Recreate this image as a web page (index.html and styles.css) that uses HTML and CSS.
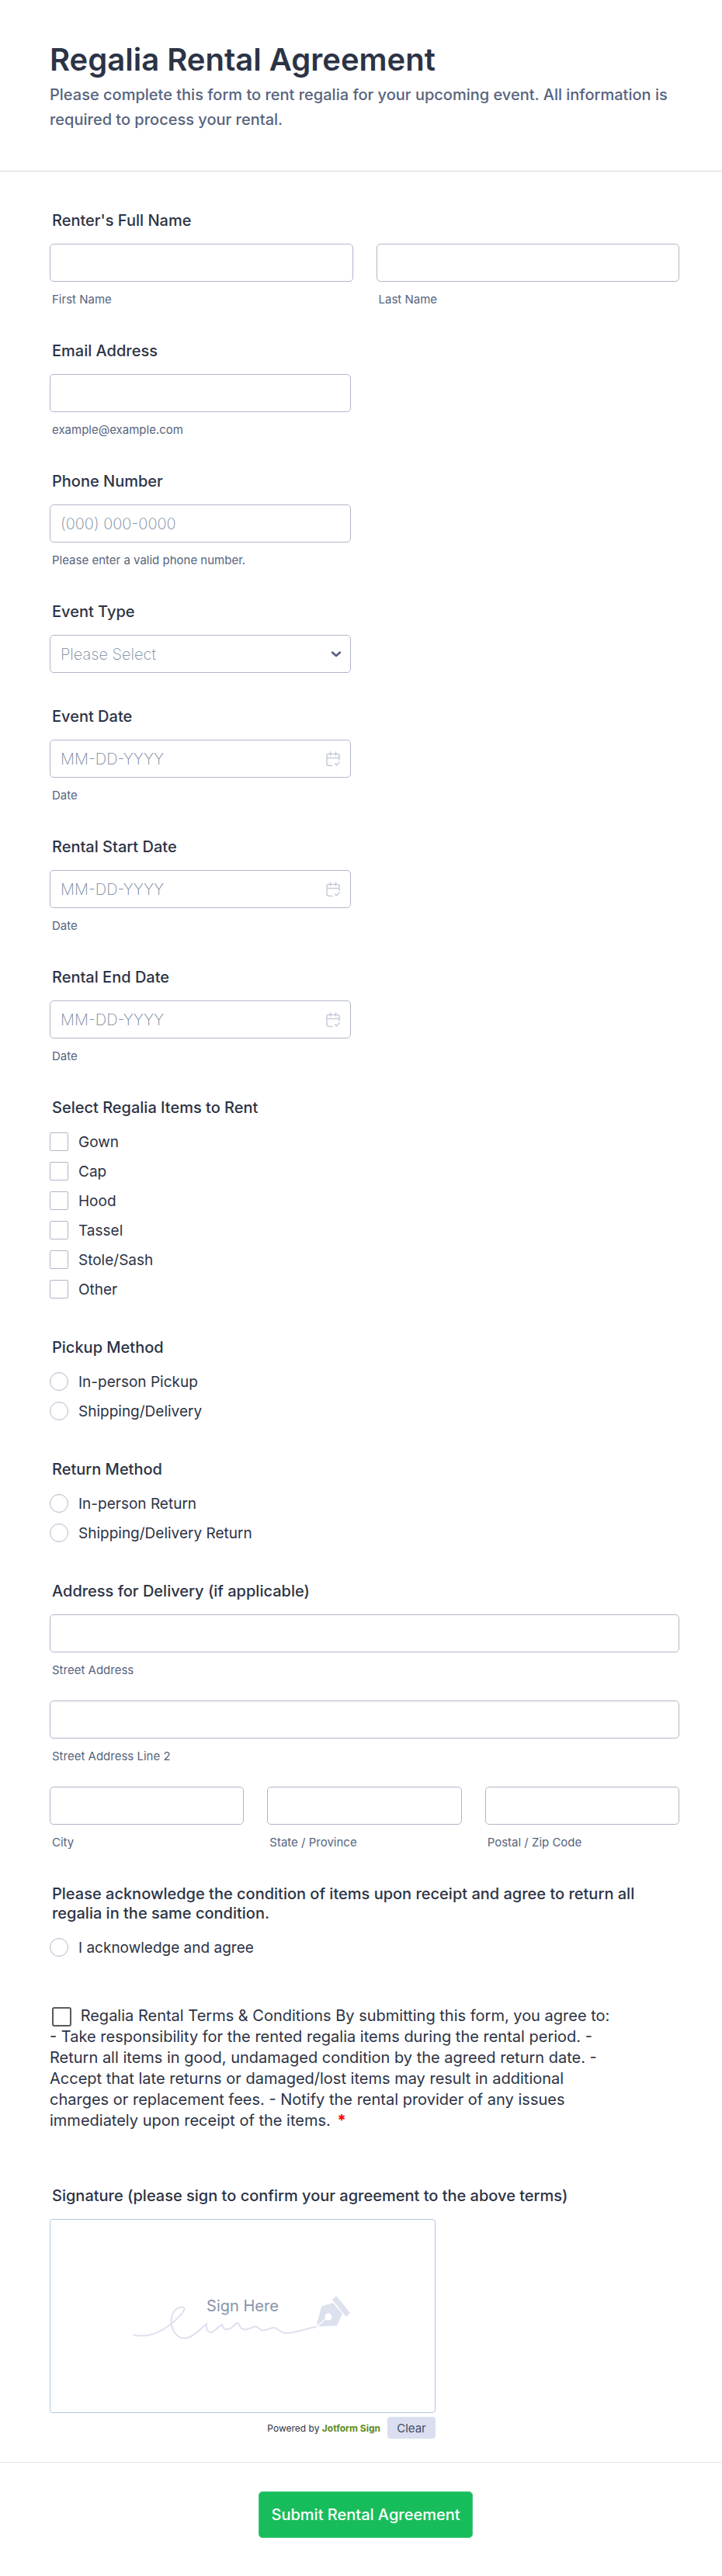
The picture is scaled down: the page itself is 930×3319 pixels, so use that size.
FILE: index.html
```html
<!DOCTYPE html>
<html lang="en">

<head>
    <meta charset="UTF-8">
    <meta name="viewport" content="width=device-width, initial-scale=1.0">
    <title>Regalia Rental Agreement</title>
    <link rel="stylesheet" href="styles.css">
</head>

<body>
    <!-- shared icon -->
    <svg class="sprite" aria-hidden="true">
        <symbol id="icon-calendar" viewBox="0 0 18 20">
            <path d="M8 18.5H4a3 3 0 0 1-3-3V5.500a2 2 0 0 1 2-2h12a2 2 0 0 1 2 2V11M1 8.500h16M5.500 1v4M12.500 1v4M11.500 16l2 2L17 14" fill="none" stroke="#c7cad9" stroke-width="1.500" stroke-linecap="round" stroke-linejoin="round" />
        </symbol>
    </svg>

    <form class="form" action="#" method="post">
        <header class="form-header">
            <h1>Regalia Rental Agreement</h1>
            <p>Please complete this form to rent regalia for your upcoming event. All information is required to process your rental.</p>
        </header>

        <div class="form-body">
            <fieldset class="field">
                <legend class="label">Renter's Full Name</legend>
                <div class="row">
                    <div class="cell">
                        <input class="input" type="text" id="first-name">
                        <label class="sub-label" for="first-name">First Name</label>
                    </div>
                    <div class="cell">
                        <input class="input" type="text" id="last-name">
                        <label class="sub-label" for="last-name">Last Name</label>
                    </div>
                </div>
            </fieldset>

            <div class="field">
                <label class="label" for="email">Email Address</label>
                <div class="cell half">
                    <input class="input" type="email" id="email">
                    <label class="sub-label" for="email">example@example.com</label>
                </div>
            </div>

            <div class="field">
                <label class="label" for="phone">Phone Number</label>
                <div class="cell half">
                    <input class="input" type="tel" id="phone" placeholder="(000) 000-0000">
                    <label class="sub-label" for="phone">Please enter a valid phone number.</label>
                </div>
            </div>

            <div class="field">
                <label class="label" for="event-type">Event Type</label>
                <div class="control half">
                    <select class="input" id="event-type">
                        <option>Please Select</option>
                    </select>
                    <svg class="arrow" viewBox="0 0 14 10" aria-hidden="true">
                        <path d="M2 2.500l5 4.500 5-4.500" fill="none" stroke="#535d80" stroke-width="2.500" stroke-linecap="round" stroke-linejoin="round" />
                    </svg>
                </div>
            </div>

            <div class="field">
                <label class="label" for="event-date">Event Date</label>
                <div class="cell half">
                    <div class="control">
                        <input class="input" type="text" id="event-date" placeholder="MM-DD-YYYY">
                        <svg class="calendar" aria-hidden="true"><use href="#icon-calendar" /></svg>
                    </div>
                    <label class="sub-label" for="event-date">Date</label>
                </div>
            </div>

            <div class="field">
                <label class="label" for="start-date">Rental Start Date</label>
                <div class="cell half">
                    <div class="control">
                        <input class="input" type="text" id="start-date" placeholder="MM-DD-YYYY">
                        <svg class="calendar" aria-hidden="true"><use href="#icon-calendar" /></svg>
                    </div>
                    <label class="sub-label" for="start-date">Date</label>
                </div>
            </div>

            <div class="field">
                <label class="label" for="end-date">Rental End Date</label>
                <div class="cell half">
                    <div class="control">
                        <input class="input" type="text" id="end-date" placeholder="MM-DD-YYYY">
                        <svg class="calendar" aria-hidden="true"><use href="#icon-calendar" /></svg>
                    </div>
                    <label class="sub-label" for="end-date">Date</label>
                </div>
            </div>

            <fieldset class="field options">
                <legend class="label">Select Regalia Items to Rent</legend>
                <label class="option"><input type="checkbox" name="items">Gown</label>
                <label class="option"><input type="checkbox" name="items">Cap</label>
                <label class="option"><input type="checkbox" name="items">Hood</label>
                <label class="option"><input type="checkbox" name="items">Tassel</label>
                <label class="option"><input type="checkbox" name="items">Stole/Sash</label>
                <label class="option"><input type="checkbox" name="items">Other</label>
            </fieldset>

            <fieldset class="field options">
                <legend class="label">Pickup Method</legend>
                <label class="option"><input type="radio" name="pickup">In-person Pickup</label>
                <label class="option"><input type="radio" name="pickup">Shipping/Delivery</label>
            </fieldset>

            <fieldset class="field options">
                <legend class="label">Return Method</legend>
                <label class="option"><input type="radio" name="return">In-person Return</label>
                <label class="option"><input type="radio" name="return">Shipping/Delivery Return</label>
            </fieldset>

            <fieldset class="field">
                <legend class="label">Address for Delivery (if applicable)</legend>
                <div class="address">
                    <div class="cell">
                        <input class="input" type="text" id="street">
                        <label class="sub-label" for="street">Street Address</label>
                    </div>
                    <div class="cell">
                        <input class="input" type="text" id="street2">
                        <label class="sub-label" for="street2">Street Address Line 2</label>
                    </div>
                    <div class="row">
                        <div class="cell">
                            <input class="input" type="text" id="city">
                            <label class="sub-label" for="city">City</label>
                        </div>
                        <div class="cell">
                            <input class="input" type="text" id="state">
                            <label class="sub-label" for="state">State / Province</label>
                        </div>
                        <div class="cell">
                            <input class="input" type="text" id="zip">
                            <label class="sub-label" for="zip">Postal / Zip Code</label>
                        </div>
                    </div>
                </div>
            </fieldset>

            <fieldset class="field options">
                <legend class="label">Please acknowledge the condition of items upon receipt and agree to return all regalia in the same condition.</legend>
                <label class="option"><input type="radio" name="acknowledge">I acknowledge and agree</label>
            </fieldset>

            <div class="field terms">
                <input type="checkbox" id="terms" required>
                <label for="terms">Regalia Rental Terms &amp; Conditions By submitting this form, you agree to: - Take responsibility for the rented regalia items during the rental period. - Return all items in good, undamaged condition by the agreed return date. - Accept that late returns or damaged/lost items may result in additional charges or replacement fees. - Notify the rental provider of any issues immediately upon receipt of the items.</label>
                <span class="required">*</span>
            </div>

            <div class="field">
                <div class="label">Signature (please sign to confirm your agreement to the above terms)</div>
                <div class="signature">
                    <div class="pad">
                        <svg class="scribble" viewBox="10 14 284 60" aria-hidden="true">
                            <path d="M11.500 68.500C32 73 50 62 62 52C74 42 81 32 73 32.500C62 33 58 47 60 56C64 70 72 74 79 72.500C90 70 99 59 105 54C104 62 107 65 110 65C116 65 120 57 125 55C127 62 130 62 135 60.500C140 58 142 53 145.500 53C148 55 147 61 154 61.500C160 61 164 58 169 57.500C172 58 173 63 178 62.500C184 62 187 59 192 59C197 60 200 66 208 66C220 66 234 60 246 58" fill="none" stroke="#dde1ee" stroke-width="2" stroke-linecap="round" />
                            <path d="M247 55l6-23.500 15-4.500 12 14-7 15.500-24 1z" fill="#dde1ee" />
                            <path d="M247 57.500L262 45" fill="none" stroke="#fff" stroke-width="1.500" />
                            <circle cx="262" cy="45" r="4.500" fill="#fff" />
                            <path d="M268 23l4-4 17 21-4 4z" fill="#dde1ee" stroke="#dde1ee" stroke-width="1.500" stroke-linejoin="round" />
                        </svg>
                        <span class="sign-here">Sign Here</span>
                    </div>
                    <div class="pad-footer">
                        <span class="powered">Powered by <b>Jotform Sign</b></span>
                        <button class="clear" type="button">Clear</button>
                    </div>
                </div>
            </div>
        </div>

        <footer class="form-footer">
            <button class="submit" type="submit">Submit Rental Agreement</button>
        </footer>
    </form>
</body>

</html>
```
FILE: styles.css
```css
* {
    box-sizing: border-box;
}

body {
    margin: 0;
    font-family: Inter, sans-serif;
    font-size: 19px;
    color: #2c3345;
    background: #fff;
}

.sprite {
    display: none;
}

.form-header {
    padding: 52px 55px 42px 64px;
    border-bottom: 1px solid #d7d8e1;
}

.form-header h1 {
    margin: 0;
    font-size: 40px;
    font-weight: 600;
    line-height: 50px;
}

.form-header p {
    margin: 4px 0 8px;
    font-size: 20px;
    font-weight: 500;
    line-height: 32px;
    color: #57647e;
}

.form-body {
    display: flex;
    flex-direction: column;
    gap: 44px;
    padding: 51px 55px 30px 64px;
}

.field {
    min-width: 0;
    margin: 0;
    padding: 0;
    border: 0;
}

.label {
    display: block;
    margin-bottom: 17px;
    padding: 0 3px;
    font-size: 20px;
    font-weight: 500;
    line-height: 25px;
}

.sub-label {
    padding: 0 3px;
    font-size: 15px;
    line-height: 20px;
    color: #57647e;
}

.row {
    display: flex;
    gap: 30px;
}

.cell {
    display: flex;
    flex: 1;
    flex-direction: column;
    gap: 13px;
    min-width: 0;
}

.half {
    width: 388px;
    max-width: 100%;
}

.address {
    display: flex;
    flex-direction: column;
    gap: 29px;
}

.input {
    display: block;
    width: 100%;
    height: 49px;
    padding: 0 13px;
    border: 1px solid #b1b7c8;
    border-radius: 5px;
    font-family: inherit;
    font-size: 20px;
    font-weight: 200;
    color: #2c3345;
    background: #fff;
}

.input::placeholder {
    color: #76889f;
    opacity: 1;
}

select.input {
    appearance: none;
    color: #76889f;
}

/* icons lie over the right end of the input */
.control {
    position: relative;
}

.arrow,
.calendar {
    position: absolute;
    top: 0;
    bottom: 0;
    margin: auto 0;
    pointer-events: none;
}

.arrow {
    right: 12px;
    width: 14px;
    height: 10px;
}

.calendar {
    right: 14px;
    width: 18px;
    height: 20px;
}

.options .label {
    margin-bottom: 12px;
}

.option {
    display: flex;
    align-items: center;
    gap: 13px;
    height: 38px;
}

.option input {
    appearance: none;
    width: 24px;
    height: 24px;
    margin: 0;
    border: 1px solid #b1b7c8;
    border-radius: 2px;
    background: #fff;
}

.option input[type="radio"] {
    border-radius: 50%;
}

.option input:checked {
    border: 7px solid #18bd5b;
}

.terms {
    max-width: 736px;
    padding: 12px 0 27px;
    font-size: 20px;
    line-height: 27px;
}

.terms input {
    appearance: none;
    width: 25px;
    height: 25px;
    margin: 0 6px 0 3px;
    border: 2px solid #5a5a60;
    border-radius: 3px;
    vertical-align: middle;
}

.terms input:checked {
    background: #18bd5b;
}

.required {
    margin-left: 3px;
    font-weight: 700;
    color: #f00;
}

.signature {
    width: 497px;
    max-width: 100%;
}

.pad {
    position: relative;
    display: flex;
    align-items: center;
    justify-content: center;
    height: 250px;
    border: 1px solid #b3c6e0;
    border-radius: 4px;
}

.scribble {
    width: 284px;
    height: 60px;
}

.sign-here {
    position: absolute;
    top: 98px;
    font-size: 20px;
    line-height: 26px;
    color: #8894ab;
}

.pad-footer {
    display: flex;
    align-items: center;
    justify-content: flex-end;
    gap: 9px;
    margin-top: 5px;
}

.powered {
    font-size: 12px;
}

.powered b {
    font-weight: 700;
    color: #5d8a1c;
}

.clear {
    width: 62px;
    height: 28px;
    padding: 0;
    border: 0;
    border-radius: 4px;
    font-family: inherit;
    font-size: 15px;
    color: #3f4b67;
    background: #dadef0;
}

.form-footer {
    padding: 37px 52px 50px 64px;
    border-top: 1px solid #e3e8f0;
    text-align: center;
}

.submit {
    height: 60px;
    padding: 0 16px;
    border: 1px solid #45cb7c;
    border-radius: 5px;
    font-family: inherit;
    font-size: 20px;
    font-weight: 500;
    color: #fff;
    background: #18bd5b;
}
```
